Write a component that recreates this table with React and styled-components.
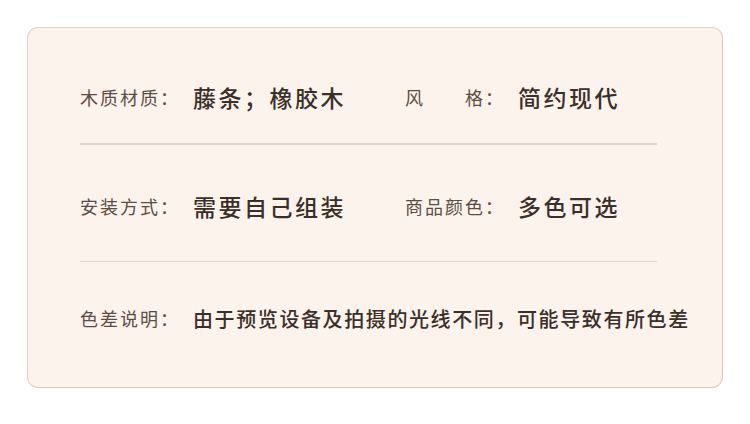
import React from "react";
import styled, { createGlobalStyle } from "styled-components";

const Global = createGlobalStyle`
  html, body { margin: 0; padding: 0; background: #ffffff; }
  body { font-family: "Noto Sans CJK SC", "Noto Sans", sans-serif; }
`;

const Page = styled.div`
  width: 750px;
  height: 424px;
  box-sizing: border-box;
  padding: 27px 27px 0 27px;
`;

const Card = styled.div`
  width: 696px;
  height: 361px;
  box-sizing: border-box;
  background: #fcf3ec;
  border: 1px solid #ecd2bb;
  border-right-color: #e0caa8;
  border-bottom-color: #e3cbb2;
  border-radius: 11px;
  padding: 46px 65px 0 52px;
  display: flex;
  flex-direction: column;
`;

const Row = styled.div`
  height: 46px;
  display: flex;
  align-items: center;
`;

const Field = styled.div`
  display: flex;
  align-items: center;
  width: ${(p) => p.$width || "auto"};
  flex: ${(p) => (p.$width ? "none" : "1")};
`;

const Label = styled.span`
  font-size: 18px;
  letter-spacing: 2px;
  color: #5c4d44;
  white-space: pre;
  margin-right: ${(p) => p.$gap || 13}px;
`;

const Value = styled.span`
  font-size: ${(p) => (p.$small ? 20 : 23)}px;
  font-weight: 500;
  letter-spacing: ${(p) => (p.$small ? 1.6 : 2.5)}px;
  color: #3a2f29;
  white-space: nowrap;
`;

const Divider = styled.div`
  height: 1.5px;
  background: #e0d5cc;
  margin: ${(p) => p.$above}px 0 ${(p) => p.$below}px 0;
`;

export default function App() {
  return (
    <Page>
      <Global />
      <Card>
        <Row>
          <Field $width="325px">
            <Label>木质材质：</Label>
            <Value>藤条；橡胶木</Value>
          </Field>
          <Field>
            <Label>风　　格：</Label>
            <Value>简约现代</Value>
          </Field>
        </Row>
        <Divider $above={23} $below={38} />
        <Row>
          <Field $width="325px">
            <Label>安装方式：</Label>
            <Value>需要自己组装</Value>
          </Field>
          <Field>
            <Label>商品颜色：</Label>
            <Value>多色可选</Value>
          </Field>
        </Row>
        <Divider $above={32} $below={33} />
        <Row>
          <Field>
            <Label>色差说明：</Label>
            <Value $small>由于预览设备及拍摄的光线不同，可能导致有所色差</Value>
          </Field>
        </Row>
      </Card>
    </Page>
  );
}
